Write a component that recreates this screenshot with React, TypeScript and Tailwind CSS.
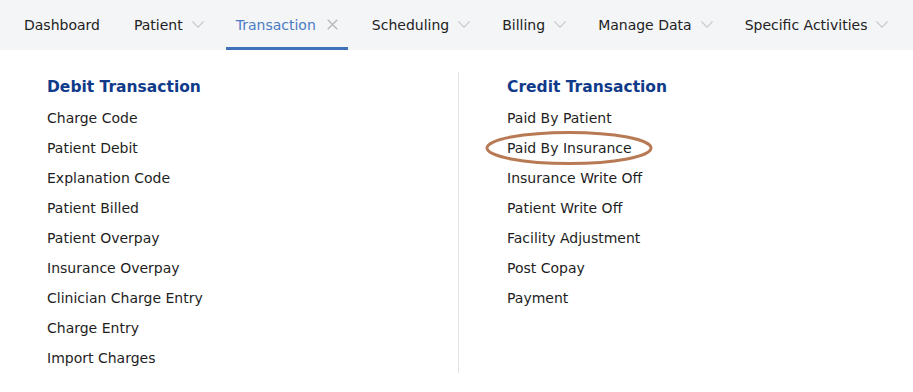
const font = { fontFamily: '"DejaVu Sans", Verdana, sans-serif' };

const navItems = [
    { label: 'Dashboard', icon: null },
    { label: 'Patient', icon: 'chevron' },
    { label: 'Transaction', icon: 'close', active: true },
    { label: 'Scheduling', icon: 'chevron' },
    { label: 'Billing', icon: 'chevron' },
    { label: 'Manage Data', icon: 'chevron' },
    { label: 'Specific Activities', icon: 'chevron' },
];

const debitItems = [
    'Charge Code',
    'Patient Debit',
    'Explanation Code',
    'Patient Billed',
    'Patient Overpay',
    'Insurance Overpay',
    'Clinician Charge Entry',
    'Charge Entry',
    'Import Charges',
];

const creditItems = [
    'Paid By Patient',
    'Paid By Insurance',
    'Insurance Write Off',
    'Patient Write Off',
    'Facility Adjustment',
    'Post Copay',
    'Payment',
];

function Chevron() {
    return (
        <svg width="12" height="7" viewBox="0 0 12 7" className="ml-[9px] mt-[2px] shrink-0">
            <path d="M0.5 0.5 L6 6.2 L11.5 0.5" fill="none" stroke="#c9cbce" strokeWidth="1.2" />
        </svg>
    );
}

function CloseIcon() {
    return (
        <svg width="11" height="11" viewBox="0 0 11 11" className="ml-[11px] mt-[1px] shrink-0">
            <path d="M0.7 0.7 L10.3 10.3 M10.3 0.7 L0.7 10.3" fill="none" stroke="#b9bbbe" strokeWidth="1.5" />
        </svg>
    );
}

export default function App() {
    return (
        <div className="w-[913px] h-[392px] bg-white overflow-hidden" style={font}>
            {/* top nav */}
            <nav className="h-[50px] bg-[#f4f5f7] flex items-stretch pl-[14px] gap-[14px] text-[14px] text-[#222222] whitespace-nowrap">
                {navItems.map(item => (
                    <div
                        key={item.label}
                        className={`flex shrink-0 items-center pl-[10px] border-b-[3px] ${item.icon === 'chevron' ? 'pr-[8px]' : 'pr-[10px]'} ${item.active ? 'border-[#3f72b8] text-[#4a7bc4]' : 'border-transparent'}`}
                    >
                        <span className="pt-[4px]">{item.label}</span>
                        {item.icon === 'chevron' && <Chevron />}
                        {item.icon === 'close' && <CloseIcon />}
                    </div>
                ))}
            </nav>

            {/* dropdown content */}
            <div className="flex pt-[22px]">
                <div className="w-[459px] pl-[47px] border-r border-[#e3e3e3]">
                    <h3 className="h-[31px] leading-[30px] text-[15.5px] font-bold text-[#103a8a]">Debit Transaction</h3>
                    <ul className="text-[14px] text-[#1e1e1e]">
                        {debitItems.map(i => (
                            <li key={i} className="h-[30px] leading-[30px]">{i}</li>
                        ))}
                    </ul>
                </div>
                <div className="pl-[48px]">
                    <h3 className="h-[31px] leading-[30px] text-[15.5px] font-bold text-[#103a8a]">Credit Transaction</h3>
                    <ul className="text-[14px] text-[#1e1e1e]">
                        {creditItems.map(i => (
                            <li key={i} className="relative h-[30px] leading-[30px]">
                                {i}
                                {i === 'Paid By Insurance' && (
                                    <svg
                                        width="168"
                                        height="36"
                                        viewBox="0 0 168 36"
                                        className="absolute left-[-22px] top-[-3px] pointer-events-none"
                                    >
                                        <ellipse cx="84" cy="18" rx="82" ry="15.5" fill="none" stroke="#b87a55" strokeWidth="3" />
                                    </svg>
                                )}
                            </li>
                        ))}
                    </ul>
                </div>
            </div>
        </div>
    );
}
